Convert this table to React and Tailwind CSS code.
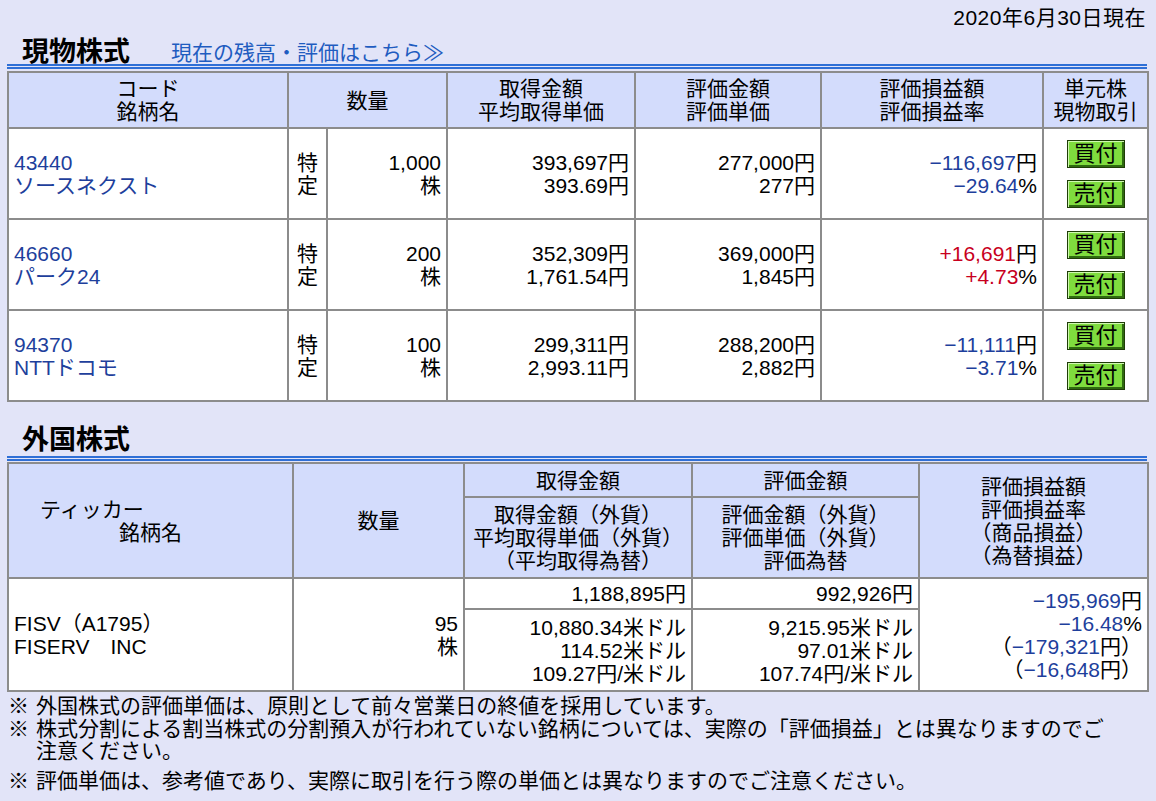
const font = { fontFamily: "'Liberation Sans', 'Noto Sans CJK JP', sans-serif" };

const stocks = [
  { code: '43440', name: 'ソースネクスト', qty: '1,000', cost: '393,697', avg: '393.69', value: '277,000', unit: '277', pl: '−116,697', rate: '−29.64', up: false },
  { code: '46660', name: 'パーク24', qty: '200', cost: '352,309', avg: '1,761.54', value: '369,000', unit: '1,845', pl: '+16,691', rate: '+4.73', up: true },
  { code: '94370', name: 'NTTドコモ', qty: '100', cost: '299,311', avg: '2,993.11', value: '288,200', unit: '2,882', pl: '−11,111', rate: '−3.71', up: false },
];

const cell = 'border-2 border-[#8c8c8c] px-[5px]';
const head = `${cell} bg-[#d3dcfc] text-center align-middle font-normal`;

function SectionTitle({ children, link, lineGap }) {
  return (
    <div>
      <div className="flex h-[24px] items-center gap-[41px] pl-[15px]">
        <h2 className="text-[27px] leading-[24px] font-bold text-black">{children}</h2>
        {link ? (
          <a href="#" className="mt-[2px] text-[21px] leading-[22px] text-[#1f5cc0]">
            {link}
          </a>
        ) : null}
      </div>
      <div className={`${lineGap} h-[5px] border-t-2 border-b-2 border-[#2f6fd6]`} />
    </div>
  );
}

function TradeButton({ label }) {
  return (
    <button
      type="button"
      className="flex h-[28px] w-[58px] items-center justify-center border border-[#1f3d08] bg-[#7fdc3e] text-[22px] leading-none text-black shadow-[inset_1px_1px_0_#d0f8b0,inset_-2px_-2px_0_#2f6a10]"
    >
      {label}
    </button>
  );
}

function Amount({ value, unit, tone }) {
  return (
    <div>
      <span className={tone}>{value}</span>
      {unit}
    </div>
  );
}

export default function App() {
  return (
    <div className="min-h-screen bg-[#e2e4f8] pl-[7px] pr-[9px] text-black" style={font}>
      <div className="pt-[6px] pr-[1px] text-right text-[21px] leading-[24px] tracking-[0.5px]">2020年6月30日現在</div>

      <div className="mt-[10px]">
        <SectionTitle link="現在の残高・評価はこちら≫" lineGap="mt-0">現物株式</SectionTitle>
      </div>

      <table className="mt-[2px] w-[1140px] table-fixed border-collapse bg-white text-[21px] leading-[23px]">
        <colgroup>
          <col className="w-[280px]" />
          <col className="w-[39px]" />
          <col className="w-[120px]" />
          <col className="w-[188px]" />
          <col className="w-[186px]" />
          <col className="w-[222px]" />
          <col className="w-[105px]" />
        </colgroup>
        <thead>
          <tr className="h-[56px]">
            <th className={head}>コード<br />銘柄名</th>
            <th colSpan={2} className={head}>数量</th>
            <th className={head}>取得金額<br />平均取得単価</th>
            <th className={head}>評価金額<br />評価単価</th>
            <th className={head}>評価損益額<br />評価損益率</th>
            <th className={head}>単元株<br />現物取引</th>
          </tr>
        </thead>
        <tbody>
          {stocks.map((s) => {
            const tone = s.up ? 'text-[#c8001e]' : 'text-[#1e3f9c]';
            return (
              <tr key={s.code} className="h-[91px]">
                <td className={`${cell} align-middle text-[#1e3f9c]`}>
                  <a href="#">{s.code}<br />{s.name}</a>
                </td>
                <td className={`${cell} text-center align-middle`}>特<br />定</td>
                <td className={`${cell} text-right align-middle`}>{s.qty}<br />株</td>
                <td className={`${cell} text-right align-middle`}>{s.cost}円<br />{s.avg}円</td>
                <td className={`${cell} text-right align-middle`}>{s.value}円<br />{s.unit}円</td>
                <td className={`${cell} text-right align-middle`}>
                  <Amount value={s.pl} unit="円" tone={tone} />
                  <Amount value={s.rate} unit="%" tone={tone} />
                </td>
                <td className={`${cell} align-middle`}>
                  <div className="flex flex-col items-center gap-[12px]">
                    <TradeButton label="買付" />
                    <TradeButton label="売付" />
                  </div>
                </td>
              </tr>
            );
          })}
        </tbody>
      </table>

      <div className="mt-[26px]">
        <SectionTitle lineGap="mt-[4px]">外国株式</SectionTitle>
      </div>

      <table className="mt-[1px] w-[1140px] table-fixed border-collapse bg-white text-[21px] leading-[23px]">
        <colgroup>
          <col className="w-[285px]" />
          <col className="w-[171px]" />
          <col className="w-[228px]" />
          <col className="w-[227px]" />
          <col className="w-[229px]" />
        </colgroup>
        <thead>
          <tr className="h-[34px]">
            <th rowSpan={2} className={head}>
              <div className="pl-[26px] text-left">ティッカー</div>
              <div>銘柄名</div>
            </th>
            <th rowSpan={2} className={head}>数量</th>
            <th className={head}>取得金額</th>
            <th className={head}>評価金額</th>
            <th rowSpan={2} className={head}>
              評価損益額<br />評価損益率<br />（商品損益）<br />（為替損益）
            </th>
          </tr>
          <tr className="h-[81px]">
            <th className={head}>取得金額（外貨）<br />平均取得単価（外貨）<br />（平均取得為替）</th>
            <th className={head}>評価金額（外貨）<br />評価単価（外貨）<br />評価為替</th>
          </tr>
        </thead>
        <tbody>
          <tr className="h-[31px]">
            <td rowSpan={2} className={`${cell} align-middle`}>FISV（A1795）<br />FISERV　INC</td>
            <td rowSpan={2} className={`${cell} text-right align-middle`}>95<br />株</td>
            <td className={`${cell} text-right align-middle`}>1,188,895円</td>
            <td className={`${cell} text-right align-middle`}>992,926円</td>
            <td rowSpan={2} className={`${cell} text-right align-middle`}>
              <Amount value="−195,969" unit="円" tone="text-[#1e3f9c]" />
              <Amount value="−16.48" unit="%" tone="text-[#1e3f9c]" />
              <div>（<span className="text-[#1e3f9c]">−179,321</span>円）</div>
              <div>（<span className="text-[#1e3f9c]">−16,648</span>円）</div>
            </td>
          </tr>
          <tr className="h-[82px]">
            <td className={`${cell} text-right align-middle`}>10,880.34米ドル<br />114.52米ドル<br />109.27円/米ドル</td>
            <td className={`${cell} text-right align-middle`}>9,215.95米ドル<br />97.01米ドル<br />107.74円/米ドル</td>
          </tr>
        </tbody>
      </table>

      <div className="mt-[3px] pl-[1px] text-[21px] leading-[22px]">
        <div className="flex">
          <span className="w-[28px] shrink-0">※</span>
          <span>外国株式の評価単価は、原則として前々営業日の終値を採用しています。</span>
        </div>
        <div className="mt-[1px] flex">
          <span className="w-[28px] shrink-0">※</span>
          <span className="whitespace-nowrap">
            株式分割による割当株式の分割預入が行われていない銘柄については、実際の「評価損益」とは異なりますのでご
            <br />
            注意ください。
          </span>
        </div>
        <div className="mt-[8px] flex">
          <span className="w-[28px] shrink-0">※</span>
          <span>評価単価は、参考値であり、実際に取引を行う際の単価とは異なりますのでご注意ください。</span>
        </div>
      </div>
    </div>
  );
}
